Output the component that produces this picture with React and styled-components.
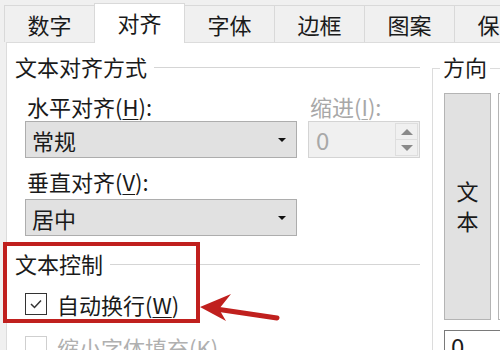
import React from 'react';
import styled, { createGlobalStyle } from 'styled-components';

const Global = createGlobalStyle`
  html, body { margin: 0; padding: 0; }
  body {
    font-family: "Noto Sans CJK SC", "Microsoft YaHei", sans-serif;
    color: #1a1a1a;
  }
`;

const Window = styled.div`
  position: relative;
  width: 500px;
  height: 350px;
  overflow: hidden;
  display: flex;
  flex-direction: column;
  background: #f0f0f0;
`;

const TabBar = styled.div`
  display: flex;
  align-items: flex-end;
  height: 42px;
  padding-left: 5px;
  flex-shrink: 0;
`;

const Tab = styled.div`
  flex-shrink: 0;
  width: 91px;
  height: ${p => (p.$active ? '40px' : '37px')};
  margin-left: -1px;
  margin-bottom: ${p => (p.$active ? '-1px' : '0')};
  box-sizing: border-box;
  border: 1px solid #d9d9d9;
  border-bottom: none;
  background: ${p => (p.$active ? '#ffffff' : '#f0f0f0')};
  position: relative;
  z-index: ${p => (p.$active ? 1 : 0)};
  display: flex;
  align-items: center;
  justify-content: center;
  font-size: 22px;
  line-height: 24px;
  padding-bottom: ${p => (p.$active ? '3px' : '0')};
`;

const Panel = styled.div`
  flex: 1;
  display: flex;
  margin-left: 6px;
  padding: 13px 0 0 8px;
  background: #fff;
  border-top: 1px solid #dcdcdc;
  border-left: 1px solid #dcdcdc;
`;

const LeftCol = styled.div`
  width: 405px;
  flex-shrink: 0;
  display: flex;
  flex-direction: column;
`;

const GroupTitle = styled.div`
  display: flex;
  align-items: center;
  gap: 7px;
  height: 24px;
  box-sizing: border-box;
  padding-bottom: 4px;
  font-size: 22px;
  line-height: 20px;
  margin-top: ${p => p.$top || 0}px;
  &::after {
    content: '';
    flex: 1;
    height: 1px;
    margin-top: 3px;
    background: #d5d5d5;
  }
`;

const FieldGrid = styled.div`
  display: grid;
  grid-template-columns: 272px 112px;
  column-gap: 11px;
  margin: 16px 0 0 10px;
`;

const Label = styled.div`
  grid-column: ${p => p.$col || 1};
  height: 24px;
  box-sizing: border-box;
  padding: 0 0 4px 2px;
  font-size: 22px;
  line-height: 20px;
  margin-top: ${p => p.$top || 0}px;
  color: ${p => (p.$disabled ? '#a8a8a8' : '#1a1a1a')};
  white-space: nowrap;
  u { text-decoration-thickness: 1px; text-underline-offset: 3px; }
`;

const Select = styled.div`
  grid-column: 1;
  height: 37px;
  margin-top: ${p => p.$top || 0}px;
  box-sizing: border-box;
  border: 1px solid #adadad;
  background: #e1e1e1;
  display: flex;
  align-items: center;
  padding: 0 10px 0 6px;
  font-size: 22px;
  line-height: 24px;
  span { flex: 1; }
  &::after {
    content: '';
    border-left: 4px solid transparent;
    border-right: 4px solid transparent;
    border-top: 4px solid #111;
  }
`;

const Spin = styled.div`
  grid-column: 2;
  grid-row: 2;
  height: 37px;
  margin-top: 1px;
  box-sizing: border-box;
  border: 1px solid #d4d4d4;
  background: #f0f0f0;
  display: flex;
  align-items: stretch;
`;

const SpinValue = styled.div`
  flex: 1;
  display: flex;
  align-items: center;
  padding-left: 7px;
  font-size: 24px;
  color: #a8a8a8;
`;

const SpinButtons = styled.div`
  width: 23px;
  margin: 1px 1px 1px 0;
  display: flex;
  flex-direction: column;
`;

const SpinBtn = styled.div`
  flex: 1;
  display: flex;
  align-items: center;
  justify-content: center;
  border: 1px solid #dedede;
  & + & { border-top: none; }
  &::before {
    content: '';
    border-left: 6px solid transparent;
    border-right: 6px solid transparent;
    ${p => (p.$up ? 'border-bottom' : 'border-top')}: 6px solid #8a8a8a;
  }
`;

const CheckRow = styled.div`
  display: flex;
  align-items: center;
  gap: 10px;
  height: 24px;
  margin: ${p => p.$top || 0}px 0 0 10px;
  font-size: 22px;
  line-height: 24px;
  color: ${p => (p.$disabled ? '#b0b0b0' : '#1a1a1a')};
  white-space: nowrap;
  u { text-decoration-thickness: 1px; text-underline-offset: 3px; }
`;

const Box = styled.div`
  width: 22px;
  height: 22px;
  flex-shrink: 0;
  box-sizing: border-box;
  border: 1px solid ${p => (p.$disabled ? '#cfcfcf' : '#333')};
  background: #fff;
  display: flex;
  align-items: center;
  justify-content: center;
`;

const DirectionGroup = styled.div`
  flex: 1;
  display: flex;
  flex-direction: column;
  margin: 12px 0 0 12px;
  padding-left: 11px;
  border-top: 1px solid #dcdcdc;
  border-left: 1px solid #dcdcdc;
`;

const DirTitle = styled.div`
  align-self: flex-start;
  margin: -15px 0 0 -4px;
  padding: 0 3px 4px;
  background: #fff;
  font-size: 22px;
  line-height: 24px;
`;

const OrientRow = styled.div`
  display: flex;
  gap: 7px;
  margin-top: 11px;
`;

const TextOrient = styled.div`
  width: 47px;
  height: 227px;
  flex-shrink: 0;
  box-sizing: border-box;
  border: 1px solid #b4b4b4;
  background: #e1e1e1;
  display: flex;
  flex-direction: column;
  align-items: center;
  justify-content: center;
  font-size: 22px;
  line-height: 30px;
  padding-bottom: 4px;
`;

const Dial = styled.div`
  width: 100px;
  height: 227px;
  flex-shrink: 0;
  box-sizing: border-box;
  border: 1px solid #b4b4b4;
`;

const DegreeInput = styled.div`
  width: 80px;
  height: 30px;
  margin-top: 10px;
  box-sizing: border-box;
  border: 1px solid #7a7a7a;
  padding-left: 6px;
  font-size: 24px;
  line-height: 30px;
`;

const Highlight = styled.div`
  position: absolute;
  left: 3px;
  top: 242px;
  width: 197px;
  height: 81px;
  box-sizing: border-box;
  border: 4px solid #c0201e;
  pointer-events: none;
`;

const Arrow = styled.svg`
  position: absolute;
  left: 196px;
  top: 288px;
  pointer-events: none;
`;

const tabs = ['数字', '对齐', '字体', '边框', '图案', '保护'];

export default function App() {
  return (
    <Window>
      <Global />
      <TabBar>
        {tabs.map(t => (
          <Tab key={t} $active={t === '对齐'}>{t}</Tab>
        ))}
      </TabBar>
      <Panel>
        <LeftCol>
          <GroupTitle><span>文本对齐方式</span></GroupTitle>
          <FieldGrid>
            <Label>水平对齐(<u>H</u>):</Label>
            <Label $col={2} $disabled>缩进(<u>I</u>):</Label>
            <Select $top={1}><span>常规</span></Select>
            <Spin>
              <SpinValue>0</SpinValue>
              <SpinButtons>
                <SpinBtn $up />
                <SpinBtn />
              </SpinButtons>
            </Spin>
            <Label $top={13}>垂直对齐(<u>V</u>):</Label>
            <Select $top={4}><span>居中</span></Select>
          </FieldGrid>
          <GroupTitle $top={17}><span>文本控制</span></GroupTitle>
          <CheckRow $top={15}>
            <Box>
              <svg width="16" height="16" viewBox="0 0 16 16">
                <polyline points="3,8 6.5,11.5 13,4.5" fill="none" stroke="#333" strokeWidth="1.5" />
              </svg>
            </Box>
            <span>自动换行(<u>W</u>)</span>
          </CheckRow>
          <CheckRow $top={19} $disabled>
            <Box $disabled />
            <span>缩小字体填充(<u>K</u>)</span>
          </CheckRow>
        </LeftCol>
        <DirectionGroup>
          <DirTitle>方向</DirTitle>
          <OrientRow>
            <TextOrient><span>文</span><span>本</span></TextOrient>
            <Dial />
          </OrientRow>
          <DegreeInput>0</DegreeInput>
        </DirectionGroup>
      </Panel>
      <Highlight />
      <Arrow width="86" height="40" viewBox="0 0 86 40">
        <line x1="20" y1="21" x2="81" y2="30" stroke="#c0201e" strokeWidth="5" strokeLinecap="round" />
        <polygon points="4,19 35,6 23,21 30,33" fill="#c0201e" />
      </Arrow>
    </Window>
  );
}
